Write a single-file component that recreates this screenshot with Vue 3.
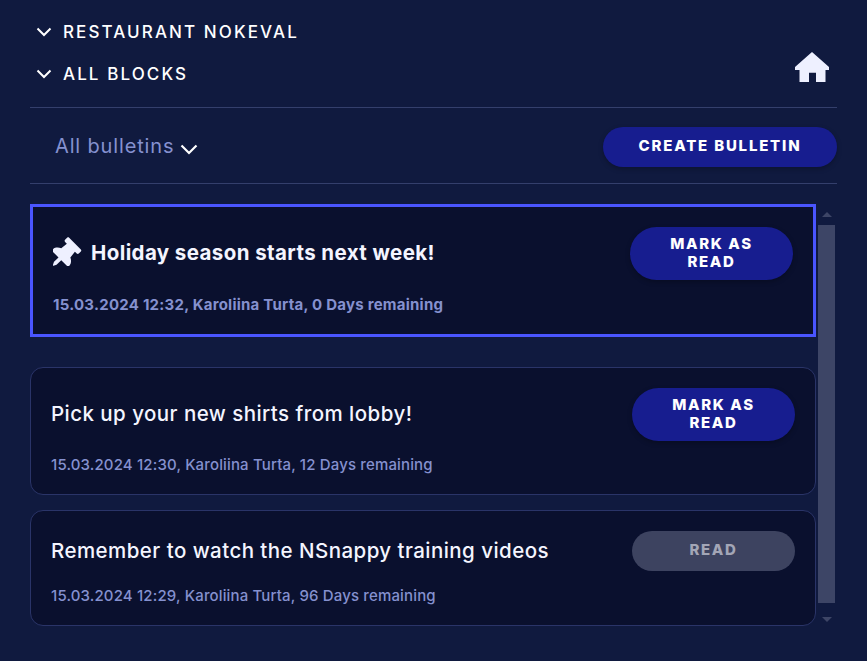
<template>
  <div class="page">
    <header class="top">
      <div class="crumbs">
        <div v-for="c in crumbs" :key="c" class="crumb">
          <svg class="chev" viewBox="0 0 16 10" width="16" height="10">
            <path d="M1.5 1.5 8 8l6.5-6.5" fill="none" stroke="#fff" stroke-width="2" />
          </svg>
          <span>{{ c }}</span>
        </div>
      </div>
      <svg class="home" viewBox="0 0 34 30" width="34" height="30">
        <path d="M17 0 34 15V18H30.5V30H21V20.7H14V30H4.5V18H0V15Z" fill="#eef0ff" />
      </svg>
    </header>

    <div class="filter">
      <div class="select">
        <span>All bulletins</span>
        <svg viewBox="0 0 18 11" width="18" height="11">
          <path d="M1.5 1.5 9 9l7.5-7.5" fill="none" stroke="#fff" stroke-width="2.2" />
        </svg>
      </div>
      <button type="button" class="btn create">CREATE BULLETIN</button>
    </div>

    <div class="content">
      <div class="list">
        <article
          v-for="b in bulletins"
          :key="b.title"
          class="card"
          :class="{ pinned: b.pinned, done: b.read }"
        >
          <div class="row">
            <h2 class="title">
              <svg v-if="b.pinned" class="pin" viewBox="11 -34 477 477" width="29" height="29">
                <path
                  transform="rotate(45 192 256)"
                  d="M298.028 214.267L285.793 96H328c13.255 0 24-10.745 24-24V24c0-13.255-10.745-24-24-24H56C42.745 0 32 10.745 32 24v48c0 13.255 10.745 24 24 24h42.207L85.972 214.267C37.465 236.82 0 277.261 0 328c0 13.255 10.745 24 24 24h136v104.007c0 1.242.289 2.467.845 3.578l24 48c2.941 5.882 11.364 5.893 14.311 0l24-48a8.008 8.008 0 0 0 .845-3.578V352h136c13.255 0 24-10.745 24-24-.001-51.183-37.983-91.42-85.973-113.733z"
                  fill="#eef0ff"
                />
              </svg>
              {{ b.title }}
            </h2>
            <button type="button" class="btn mark" :class="{ read: b.read }">
              {{ b.read ? 'READ' : 'MARK AS READ' }}
            </button>
          </div>
          <p class="meta">{{ b.meta }}</p>
        </article>
      </div>
      <div class="scrollbar">
        <span class="arrow up"></span>
        <span class="thumb"></span>
        <span class="arrow down"></span>
      </div>
    </div>
  </div>
</template>

<script setup>
const crumbs = ['RESTAURANT NOKEVAL', 'ALL BLOCKS'];

const bulletins = [
  {
    title: 'Holiday season starts next week!',
    meta: '15.03.2024 12:32, Karoliina Turta, 0 Days remaining',
    pinned: true,
  },
  {
    title: 'Pick up your new shirts from lobby!',
    meta: '15.03.2024 12:30, Karoliina Turta, 12 Days remaining',
  },
  {
    title: 'Remember to watch the NSnappy training videos',
    meta: '15.03.2024 12:29, Karoliina Turta, 96 Days remaining',
    read: true,
  },
];
</script>

<style>
html,
body {
  margin: 0;
  background: #101a3f;
}
</style>

<style scoped>
.page {
  height: 661px;
  box-sizing: border-box;
  padding: 11px 30px 0;
  background: #101a3f;
  font-family: Inter, "Liberation Sans", sans-serif;
  color: #fff;
  overflow: hidden;
}
.top {
  display: flex;
  justify-content: space-between;
  align-items: flex-start;
  height: 97px;
  box-sizing: border-box;
  border-bottom: 1px solid #343f6c;
}
.crumb {
  display: flex;
  align-items: center;
  gap: 11px;
  height: 42px;
  padding-left: 6px;
  font-size: 17px;
  font-weight: 500;
  letter-spacing: 2.1px;
}
.home {
  margin: 41px 8px 0 0;
}
.filter {
  display: flex;
  justify-content: space-between;
  align-items: center;
  height: 76px;
  box-sizing: border-box;
  padding-top: 2px;
  border-bottom: 1px solid #343f6c;
}
.select {
  display: flex;
  align-items: center;
  gap: 6px;
  padding: 0 0 2px 25px;
  font-size: 20px;
  letter-spacing: 0.85px;
  color: #8591cf;
}
.select svg {
  margin-top: 7px;
}
.btn {
  border: 0;
  background: #171d8f;
  color: #fff;
  font-family: inherit;
  font-weight: 800;
  font-size: 15px;
  letter-spacing: 1.6px;
  border-radius: 27px;
  box-shadow: 0 2px 5px rgba(0, 0, 0, 0.25);
}
.create {
  width: 234px;
  height: 40px;
  padding: 0 0 2px;
  letter-spacing: 1.8px;
}
.content {
  display: flex;
  gap: 2px;
  padding-top: 20px;
}
.list {
  width: 786px;
  display: flex;
  flex-direction: column;
  gap: 15px;
}
.card {
  box-sizing: border-box;
  height: 128px;
  padding: 20px 20px 0;
  background: #0a102e;
  border: 1px solid #2a3468;
  border-radius: 13px;
}
.card.pinned {
  height: 133px;
  margin-bottom: 15px;
  border: 3px solid #4a55ff;
  border-radius: 0;
}
.card.done {
  height: 116px;
}
.row {
  display: flex;
  justify-content: space-between;
  align-items: center;
  min-height: 53px;
}
.done .row {
  min-height: 40px;
}
.title {
  display: flex;
  align-items: center;
  gap: 9px;
  margin: 0;
  padding-bottom: 2px;
  font-size: 20.5px;
  font-weight: 500;
  letter-spacing: 0.45px;
  color: #f4f5ff;
}
.pinned .title {
  font-weight: 700;
  letter-spacing: 0.4px;
}
.pin {
  flex: none;
  margin-top: -2px;
}
.mark {
  width: 163px;
  height: 53px;
  padding: 0 30px 2px;
  line-height: 18px;
}
.mark.read {
  height: 40px;
  background: #3d4360;
  color: #a3a6b6;
  box-shadow: none;
}
.meta {
  margin: 14px 0 0;
  font-size: 15px;
  font-weight: 500;
  letter-spacing: 0.15px;
  color: #8591cf;
}
.pinned .meta {
  margin-top: 15px;
  font-weight: 700;
  letter-spacing: 0.24px;
}
.done .meta {
  margin-top: 15px;
}
.scrollbar {
  width: 17px;
  height: 422px;
  display: flex;
  flex-direction: column;
  align-items: center;
}
.arrow {
  width: 0;
  height: 0;
  border-left: 5px solid transparent;
  border-right: 5px solid transparent;
}
.arrow.up {
  margin-top: 8px;
  border-bottom: 5px solid #3d4566;
}
.arrow.down {
  margin-top: 14px;
  border-top: 5px solid #3d4566;
}
.thumb {
  width: 17px;
  height: 378px;
  margin-top: 8px;
  background: #3d4566;
}
</style>
